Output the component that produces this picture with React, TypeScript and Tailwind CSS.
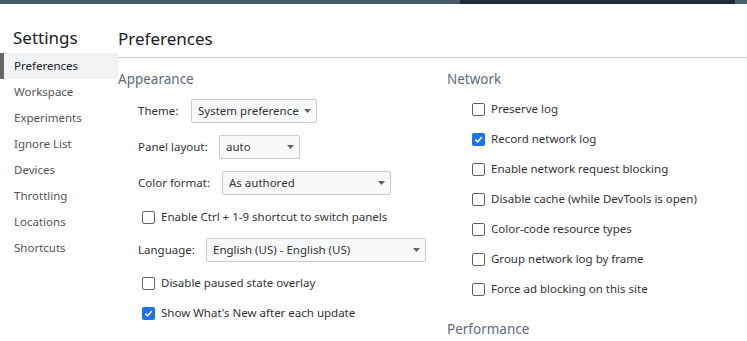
const font = { fontFamily: '"Noto Sans", "Open Sans", sans-serif' };

const menu = ["Preferences", "Workspace", "Experiments", "Ignore List", "Devices", "Throttling", "Locations", "Shortcuts"];

const network = [
  { label: "Preserve log", checked: false },
  { label: "Record network log", checked: true },
  { label: "Enable network request blocking", checked: false },
  { label: "Disable cache (while DevTools is open)", checked: false },
  { label: "Color-code resource types", checked: false },
  { label: "Group network log by frame", checked: false },
  { label: "Force ad blocking on this site", checked: false },
];

function Box({ checked }: { checked: boolean }) {
  if (checked) {
    return (
      <span className="flex h-[13px] w-[13px] shrink-0 items-center justify-center rounded-[2px] bg-[#1a73e8]">
        <svg width="9" height="9" viewBox="0 0 10 10">
          <path d="M1.5 5.2 L4 7.6 L8.6 2.4" fill="none" stroke="white" strokeWidth="1.8" />
        </svg>
      </span>
    );
  }
  return <span className="h-[13px] w-[13px] shrink-0 rounded-[2px] border border-[#5f6368] bg-white" />;
}

function Check({ label, checked, className }: { label: string; checked: boolean; className: string }) {
  return (
    <div className={"flex h-[20px] items-center gap-[6px] whitespace-nowrap " + className}>
      <Box checked={checked} />
      <span>{label}</span>
    </div>
  );
}

function Select({ value, width }: { value: string; width: string }) {
  return (
    <div className={"flex h-[24px] items-center justify-between whitespace-nowrap rounded-[2px] border border-[#cacdd1] bg-[#f8f9fa] pl-[6px] pr-[5px] " + width}>
      <span>{value}</span>
      <svg width="7" height="4" viewBox="0 0 7 4">
        <path d="M0 0 L7 0 L3.5 4 Z" fill="#5f6368" />
      </svg>
    </div>
  );
}

export default function App() {
  return (
    <div className="h-[341px] w-[747px] overflow-hidden bg-white text-[11.5px] text-[#333]" style={font}>
      <div className="flex h-[4px]">
        <div className="w-[460px] bg-[#465a66]" />
        <div className="w-[275px] bg-[#1d2d38]" />
        <div className="flex-1 bg-[#4f6270]" />
      </div>
      <div className="flex">
        <div className="w-[118px] shrink-0">
          <div className="h-[49px] pl-[13px] pt-[23px] text-[17px] leading-[22px] text-[#202124]">Settings</div>
          {menu.map((m, i) => (
            <div
              key={m}
              className={
                i === 0
                  ? "flex h-[26px] items-center border-l-[4px] border-[#666] bg-[#f1f3f4] pl-[10px] text-[#202124]"
                  : "flex h-[26px] items-center pl-[14px] text-[#555]"
              }
            >
              {m}
            </div>
          ))}
        </div>
        <div className="flex-1">
          <div className="h-[54px] border-b border-[#d0d0d0] pt-[24px] text-[17px] leading-[22px] text-[#202124]">Preferences</div>
          <div className="flex">
            <div className="flex w-[329px] shrink-0 flex-col">
              <div className="mt-[11px] flex h-[20px] items-center text-[13.5px] text-[#5f6b7c]">Appearance</div>
              <div className="ml-[20px] mt-[10px] flex h-[24px] items-center">
                <span className="w-[53px]">Theme:</span>
                <Select value="System preference" width="w-[126px]" />
              </div>
              <div className="ml-[20px] mt-[12px] flex h-[24px] items-center">
                <span className="w-[81px]">Panel layout:</span>
                <Select value="auto" width="w-[81px]" />
              </div>
              <div className="ml-[20px] mt-[12px] flex h-[24px] items-center">
                <span className="w-[84px]">Color format:</span>
                <Select value="As authored" width="w-[169px]" />
              </div>
              <Check className="ml-[24px] mt-[12px]" label="Enable Ctrl + 1-9 shortcut to switch panels" checked={false} />
              <div className="ml-[20px] mt-[11px] flex h-[24px] items-center">
                <span className="w-[68px]">Language:</span>
                <Select value="English (US) - English (US)" width="w-[220px]" />
              </div>
              <Check className="ml-[24px] mt-[11px]" label="Disable paused state overlay" checked={false} />
              <Check className="ml-[24px] mt-[10px]" label="Show What's New after each update" checked={true} />
            </div>
            <div className="flex flex-1 flex-col">
              <div className="mt-[11px] flex h-[20px] items-center text-[13.5px] text-[#5f6b7c]">Network</div>
              {network.map((n) => (
                <Check key={n.label} className="ml-[25px] mt-[10px]" label={n.label} checked={n.checked} />
              ))}
              <div className="mt-[20px] flex h-[20px] items-center text-[13.5px] text-[#5f6b7c]">Performance</div>
            </div>
          </div>
        </div>
      </div>
    </div>
  );
}
